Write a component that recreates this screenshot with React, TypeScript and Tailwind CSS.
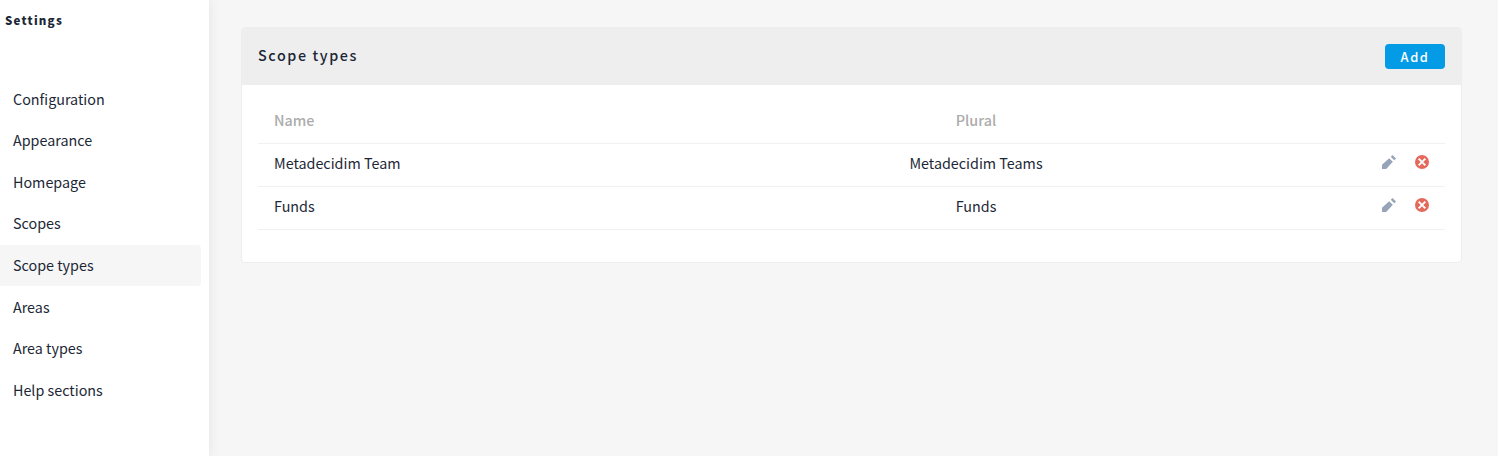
const menuItems = [
  "Configuration",
  "Appearance",
  "Homepage",
  "Scopes",
  "Scope types",
  "Areas",
  "Area types",
  "Help sections",
];

const scopeTypes = [
  { name: "Metadecidim Team", plural: "Metadecidim Teams" },
  { name: "Funds", plural: "Funds" },
];

function PencilIcon() {
  return (
    <svg viewBox="0 0 8 8" className="size-3.5 fill-[#97a3b6]" aria-hidden="true">
      <path d="M6 0L5 1l2 2 1-1-2-2zM4.1 1.8L0 5.6V8h2.4l3.8-4.1-2.1-2.1z" />
    </svg>
  );
}

function CircleXIcon() {
  return (
    <svg viewBox="0 0 8 8" className="size-3.5" aria-hidden="true">
      <circle cx="4" cy="4" r="4" className="fill-[#e5695b]" />
      <path d="M2.1 2.1l3.8 3.8M5.9 2.1L2.1 5.9" className="stroke-white stroke-[1.1]" />
    </svg>
  );
}

function Sidebar() {
  return (
    <aside className="z-10 w-[209px] shrink-0 bg-white shadow-[0_0_12px_rgba(0,0,0,0.08)]">
      <h2 className="h-[78.6px] pt-2 pl-[5px] text-[11.5px] leading-[24px] font-black tracking-[1.22px]">
        Settings
      </h2>
      <ul className="w-[201px]">
        {menuItems.map((item) => (
          <li
            key={item}
            className={
              item === "Scope types"
                ? "h-[41.6px] rounded-r bg-[#f6f6f6] bg-clip-content pb-[0.6px]"
                : "h-[41.6px]"
            }
          >
            <a href="#" className="block pl-[13px] leading-[40px]">
              {item}
            </a>
          </li>
        ))}
      </ul>
    </aside>
  );
}

export default function App() {
  return (
    <div className="flex h-[456px] overflow-hidden bg-[#f6f6f6] font-['Noto_Sans_CJK_SC',sans-serif] text-[14.33px] text-[#1c2736]">
      <Sidebar />
      <main className="flex-1 pt-[27px] pr-9 pl-8">
        <section className="h-[236px] overflow-hidden rounded border border-[#ededed] bg-white">
          <header className="flex h-[57px] items-center justify-between bg-[#eeeeee] px-4">
            <h1 className="pb-[3px] text-[14.33px] font-medium tracking-[1.6px]">Scope types</h1>
            <button className="h-[25px] w-[60px] rounded bg-[#039be5] text-[12.9px] leading-[25px] font-medium tracking-[1.5px] text-white">
              Add
            </button>
          </header>
          <div className="px-4 pt-[15px]">
            <table className="w-full table-fixed border-collapse">
              <colgroup>
                <col className="w-[545px]" />
                <col className="w-[346px]" />
                <col />
              </colgroup>
              <thead>
                <tr className="h-[43px] border-b border-[#f1f1f1] leading-6 text-[#acacac]">
                  <th className="pb-[3px] pl-4 text-left font-medium">Name</th>
                  <th className="pb-[3px] font-medium">Plural</th>
                  <th />
                </tr>
              </thead>
              <tbody>
                {scopeTypes.map((type) => (
                  <tr key={type.name} className="h-[43px] border-b border-[#f1f1f1]">
                    <td className="pb-1 pl-4 leading-6">{type.name}</td>
                    <td className="pb-1 text-center leading-6">{type.plural}</td>
                    <td className="pr-4">
                      <div className="flex justify-end gap-[19px] pb-[5px]">
                        <PencilIcon />
                        <CircleXIcon />
                      </div>
                    </td>
                  </tr>
                ))}
              </tbody>
            </table>
          </div>
        </section>
      </main>
    </div>
  );
}
